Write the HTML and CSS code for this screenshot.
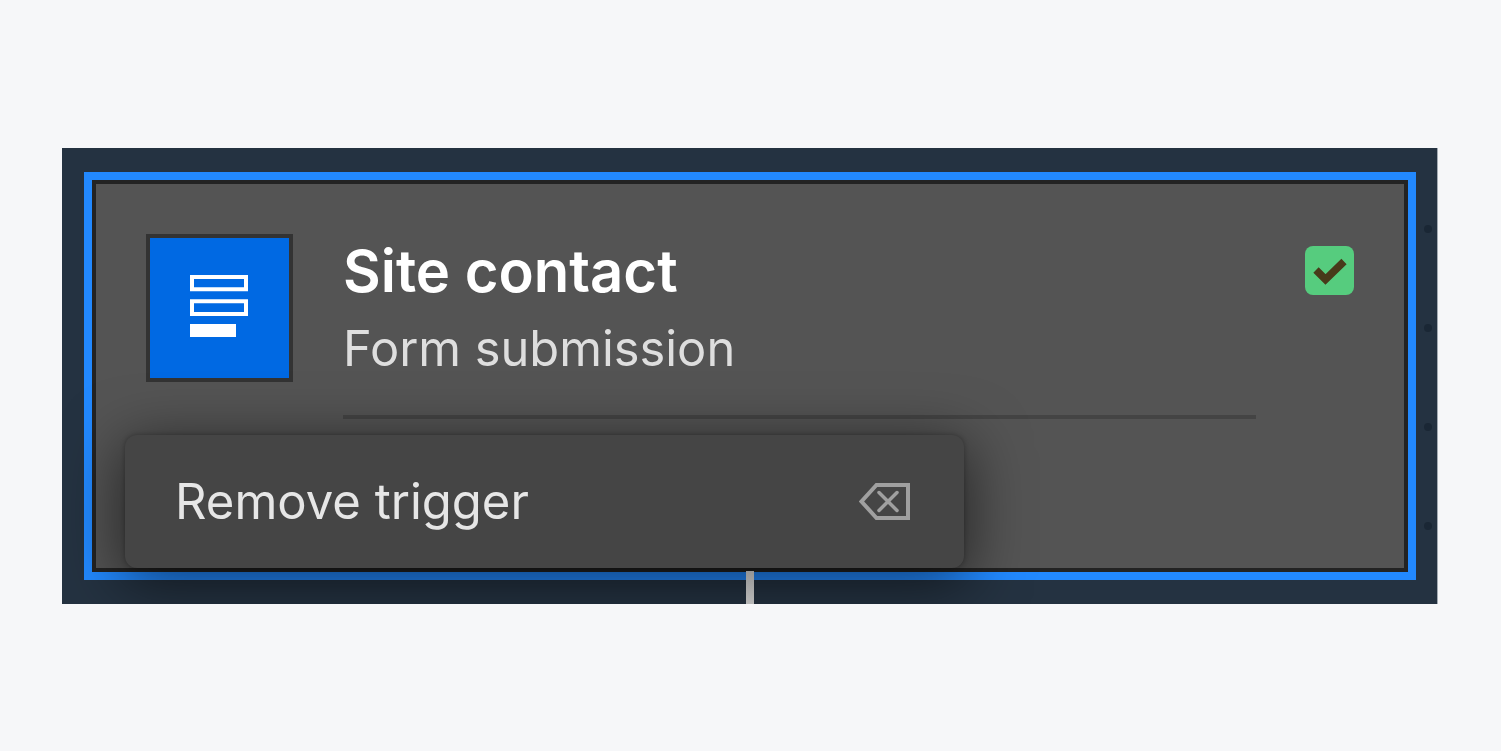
FILE: index.html
```html
<!DOCTYPE html>
<html lang="en">
  <head>
    <meta charset="UTF-8" />
    <meta name="viewport" content="width=device-width, initial-scale=1.0" />
    <title>Site contact</title>
    <link rel="stylesheet" href="styles.css">
  </head>
  <body>
    <div class="panel">
      <div class="trigger">
        <div class="trigger-icon">
          <svg width="58" height="62" viewBox="0 0 58 62">
            <path fill="none" stroke="#fff" stroke-width="4" d="M2 2h54v12.3H2zM2 26.3h54V39H2z" />
            <rect y="49" width="46" height="13" fill="#fff" />
          </svg>
        </div>
        <div class="trigger-body">
          <h3>Site contact</h3>
          <p>Form submission</p>
          <hr class="divider" />
        </div>
        <div class="status">
          <svg width="34" height="28" viewBox="0 0 34 28">
            <path fill="none" stroke="#483a1a" stroke-width="7.5" d="M3 13 L12.5 22.5 L31 4.5" />
          </svg>
        </div>
      </div>
      <div class="connector"></div>
      <div class="dots">
        <span></span>
        <span></span>
        <span></span>
        <span></span>
      </div>
      <div class="menu">
        <span>Remove trigger</span>
        <svg width="51" height="37" viewBox="0 0 51 37">
          <path fill="none" stroke="#a0a0a0" stroke-width="4" d="M49 2H17.5L2.5 18.5 17.5 35H49z" />
          <path fill="none" stroke="#a0a0a0" stroke-width="3.5" stroke-linecap="round" d="M20 9.5l18 18M38 9.5l-18 18" />
        </svg>
      </div>
    </div>
  </body>
</html>
```

FILE: styles.css
```css
* {
  box-sizing: border-box;
}

body {
  margin: 0;
  height: 751px;
  background: #f6f7f9;
  padding: 148px 0 0 62px;
  font-family: Inter, "Liberation Sans", sans-serif;
}

.panel {
  position: relative;
  width: 1376px;
  height: 456px;
  padding: 24px 21px 24px 22px;
  background: #243241;
  border-right: 1px solid #a3abb3;
  overflow: hidden;
}

.trigger {
  display: flex;
  align-items: flex-start;
  height: 392px;
  margin: 8px;
  padding: 50px 0 0 49.5px;
  background: #545454;
  border: 4px solid #232323;
  outline: 8px solid #2289ff;
}

.trigger-icon {
  flex: none;
  display: flex;
  align-items: center;
  justify-content: center;
  width: 147.5px;
  height: 148px;
  padding-bottom: 4px;
  background: #0069e3;
  border: 4px solid #333;
}

.trigger-body {
  flex: none;
  width: 913px;
  margin-left: 50px;
}

.trigger-body h3 {
  margin: 0;
  padding-top: 2px;
  color: #fff;
  font-size: 58px;
  line-height: 70px;
  font-weight: 600;
  box-sizing: content-box;
}

.trigger-body p {
  margin: 14px 0 0;
  color: #dedede;
  font-size: 48.8px;
  line-height: 58px;
}

.divider {
  margin: 37px 0 0;
  height: 4px;
  border: none;
  background: #444;
}

.status {
  flex: none;
  display: flex;
  align-items: center;
  justify-content: center;
  width: 49px;
  height: 49px;
  margin: 12px 0 0 49px;
  background: #56cc7e;
  border-radius: 8px;
}

.connector {
  position: absolute;
  z-index: 1;
  left: 684px;
  top: 423px;
  width: 8px;
  height: 33px;
  background: linear-gradient(#959595, #b8b8b8);
}

.dots {
  position: absolute;
  left: 1362px;
  top: 77px;
  display: grid;
  gap: 91px;
}

.dots span {
  display: block;
  width: 8px;
  height: 8px;
  border-radius: 50%;
  background: #1a2735;
}

.menu {
  position: absolute;
  left: 63px;
  top: 287px;
  display: flex;
  align-items: center;
  justify-content: space-between;
  width: 839px;
  height: 133px;
  padding: 0 54px 0 50px;
  background: #454545;
  border-radius: 12px;
  color: #e6e6e6;
  font-size: 49px;
  box-shadow: 0 0 5px rgba(0, 0, 0, 0.3), 0 12px 60px 4px rgba(0, 0, 0, 0.56);
}
```
